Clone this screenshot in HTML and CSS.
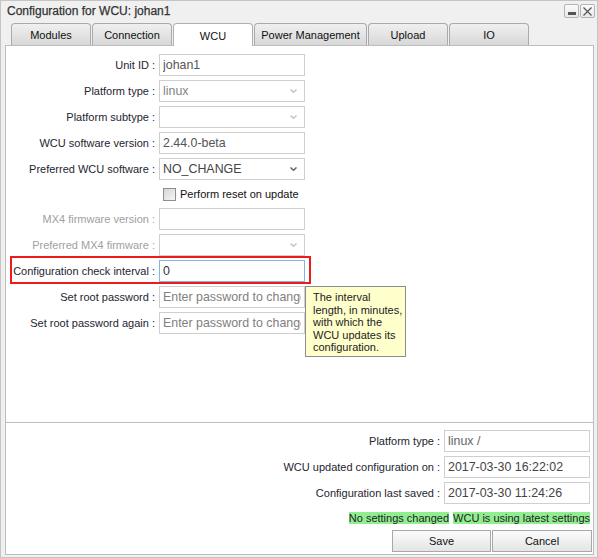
FILE: index.html
```html
<!DOCTYPE html>
<html>
<head>
<meta charset="utf-8">
<link rel="stylesheet" href="styles.css">
</head>
<body>
<div class="window">
  <div class="titlebar">
    <span class="title">Configuration for WCU: johan1</span>
    <div class="ctrls">
      <span class="ctrl"><svg width="8" height="3" viewBox="0 0 8 3"><rect x="0" y="0" width="8" height="3" fill="#555"/></svg></span>
      <span class="ctrl"><svg width="9" height="9" viewBox="0 0 9 9"><path d="M0.5 0.5 L8.5 8.5 M8.5 0.5 L0.5 8.5" stroke="#555" stroke-width="1.2" fill="none"/></svg></span>
    </div>
  </div>
  <div class="tabs">
    <div class="tab">Modules</div>
    <div class="tab">Connection</div>
    <div class="tab active">WCU</div>
    <div class="tab wide">Power Management</div>
    <div class="tab">Upload</div>
    <div class="tab">IO</div>
  </div>
  <div class="panel">
    <div class="upper">
      <div class="rows">
        <div class="row"><span class="label">Unit ID :</span><input class="field" value="johan1"></div>
        <div class="row"><span class="label">Platform type :</span><div class="field select dim"><span>linux</span><svg class="arrow" width="7" height="4" viewBox="0 0 7 4"><path d="M0.5 0.5 L3.5 3.3 L6.5 0.5" stroke="#c4c4c4" stroke-width="1.4" fill="none"/></svg></div></div>
        <div class="row"><span class="label">Platform subtype :</span><div class="field select"><span></span><svg class="arrow" width="7" height="4" viewBox="0 0 7 4"><path d="M0.5 0.5 L3.5 3.3 L6.5 0.5" stroke="#c4c4c4" stroke-width="1.4" fill="none"/></svg></div></div>
        <div class="row"><span class="label">WCU software version :</span><input class="field" value="2.44.0-beta"></div>
        <div class="row"><span class="label">Preferred WCU software :</span><div class="field select dark"><span>NO_CHANGE</span><svg class="arrow" width="7" height="4" viewBox="0 0 7 4"><path d="M0.5 0.5 L3.5 3.3 L6.5 0.5" stroke="#666" stroke-width="1.5" fill="none"/></svg></div></div>
        <div class="row check-row"><span class="label"></span><span class="checkbox"></span><span class="check-label">Perform reset on update</span></div>
        <div class="row"><span class="label disabled">MX4 firmware version :</span><input class="field" value=""></div>
        <div class="row"><span class="label disabled">Preferred MX4 firmware :</span><div class="field select"><span></span><svg class="arrow" width="7" height="4" viewBox="0 0 7 4"><path d="M0.5 0.5 L3.5 3.3 L6.5 0.5" stroke="#c4c4c4" stroke-width="1.4" fill="none"/></svg></div></div>
        <div class="row marked"><span class="label">Configuration check interval :</span><input class="field focused" value="0"></div>
        <div class="row"><span class="label">Set root password :</span><input class="field" placeholder="Enter password to change"></div>
        <div class="row"><span class="label">Set root password again :</span><input class="field" placeholder="Enter password to change"></div>
      </div>
      <div class="tooltip">The interval<br>length, in minutes,<br>with which the<br>WCU updates its<br>configuration.</div>
    </div>
    <div class="lower">
      <div class="lrow"><span class="label">Platform type :</span><input class="field soft" value="linux /"></div>
      <div class="lrow"><span class="label">WCU updated configuration on :</span><input class="field" value="2017-03-30 16:22:02"></div>
      <div class="lrow"><span class="label">Configuration last saved :</span><input class="field" value="2017-03-30 11:24:26"></div>
      <div class="status"><span class="ok">No settings changed</span><span class="ok">WCU is using latest settings</span></div>
      <div class="buttons"><div class="btn save">Save</div><div class="btn cancel">Cancel</div></div>
    </div>
  </div>
</div>
</body>
</html>
```
FILE: styles.css
```css
html, body {
  margin: 0;
  padding: 0;
  background: #f0f0f0;
}
.window {
  width: 598px;
  height: 558px;
  box-sizing: border-box;
  border: 1px solid #c4c4c4;
  background: #f0f0f0;
  font-family: "Liberation Sans", Arial, sans-serif;
  font-size: 11px;
  color: #1e2530;
  padding: 0 3px 0 4px;
}
.titlebar {
  height: 22px;
  display: flex;
  align-items: center;
  padding-left: 2px;
}
.title {
  font-size: 12px;
  color: #333;
  margin-top: -2px;
  -webkit-text-stroke: 0.25px #333;
}
.ctrls {
  margin-left: auto;
  display: flex;
  gap: 1px;
  margin-right: -1px;
  margin-top: -2px;
}
.ctrl {
  width: 15px;
  height: 14px;
  box-sizing: border-box;
  border: 1px solid #b4b4b4;
  border-radius: 2px;
  background: linear-gradient(#fbfbfb, #e9e9e9);
  display: flex;
  align-items: center;
  justify-content: center;
}
.ctrl:first-child svg {
  margin-top: 5px;
}
.tabs {
  height: 22px;
  display: flex;
  gap: 1px;
  padding-left: 6px;
  position: relative;
  z-index: 1;
}
.tab {
  width: 80px;
  height: 22px;
  box-sizing: border-box;
  border: 1px solid #aaa;
  border-bottom: none;
  border-radius: 4px 4px 0 0;
  background: linear-gradient(#f0f0f0, #d8d8d8);
  display: flex;
  align-items: center;
  justify-content: center;
  color: #111;
  padding-top: 1px;
}
.tab.wide {
  width: 113px;
}
.tab.active {
  background: #fff;
  height: 23px;
  border-color: #b0b0b0;
}
.panel {
  width: 589px;
  height: 510px;
  box-sizing: border-box;
  border: 1px solid #bdbdbd;
  background: #fff;
  display: flex;
  flex-direction: column;
}
.upper {
  height: 377px;
  box-sizing: border-box;
  border-bottom: 1px solid #bdbdbd;
  position: relative;
  padding-top: 8px;
}
.rows {
  display: flex;
  flex-direction: column;
  align-items: flex-start;
  gap: 4px;
}
.row {
  display: flex;
  align-items: center;
  gap: 4px;
  height: 22px;
}
.row .label {
  width: 149px;
  flex: none;
  text-align: right;
}
.label.disabled {
  color: #a0a0a0;
}
.field {
  width: 146px;
  height: 22px;
  box-sizing: border-box;
  border: 1px solid #cfcfcf;
  background: #fff;
  padding: 0 3px;
  margin: 0;
  font-family: "Liberation Sans", Arial, sans-serif;
  font-size: 12.4px;
  color: #555;
  outline: none;
  flex: none;
}
.field::placeholder {
  color: #808080;
  opacity: 1;
}
.field.focused {
  border-color: #80b6e6;
  color: #333;
}
.field.soft {
  color: #666;
}
.select {
  display: flex;
  align-items: center;
  justify-content: space-between;
}
.select.dim {
  color: #858585;
}
.select.dark {
  color: #444;
}
.arrow {
  margin-right: 4px;
}
.check-row {
  height: 20px;
}
.checkbox {
  width: 13px;
  height: 13px;
  box-sizing: border-box;
  border: 1px solid #8e8e8e;
  background: linear-gradient(135deg, #d6d6d6, #f6f6f6);
  margin-left: 4px;
  flex: none;
}
.check-label {
  color: #111;
}
.marked {
  position: relative;
}
.marked::after {
  content: "";
  position: absolute;
  left: 4px;
  top: -4px;
  right: -6px;
  bottom: -2px;
  border: 2px solid #ec1c1c;
  pointer-events: none;
}
.tooltip {
  position: absolute;
  left: 299px;
  top: 240px;
  width: 101px;
  height: 71px;
  box-sizing: border-box;
  border: 1px solid #8c8c8c;
  background: #ffffcc;
  padding: 4px 0 0 7px;
  font-size: 11px;
  line-height: 12.5px;
  color: #222;
  white-space: nowrap;
}
.lower {
  flex: 1;
  padding-top: 7px;
  padding-right: 3px;
  display: flex;
  flex-direction: column;
  gap: 4px;
}
.lrow {
  display: flex;
  justify-content: flex-end;
  align-items: center;
  gap: 4px;
  height: 22px;
}
.lrow .field {
  color: #444;
}
.lrow .field.soft {
  color: #666;
}
.status {
  display: flex;
  justify-content: flex-end;
  gap: 4px;
  margin-top: 4px;
  height: 12px;
}
.ok {
  background: #90ee90;
  line-height: 12px;
  color: #222;
}
.buttons {
  display: flex;
  justify-content: flex-end;
  gap: 1px;
  margin-top: 2px;
  margin-right: -2px;
}
.btn {
  height: 22px;
  box-sizing: border-box;
  border: 1px solid #a8a8a8;
  background: linear-gradient(#fcfcfc, #e4e4e4);
  display: flex;
  align-items: center;
  justify-content: center;
  color: #111;
}
.btn.save {
  width: 99px;
}
.btn.cancel {
  width: 100px;
}
```
